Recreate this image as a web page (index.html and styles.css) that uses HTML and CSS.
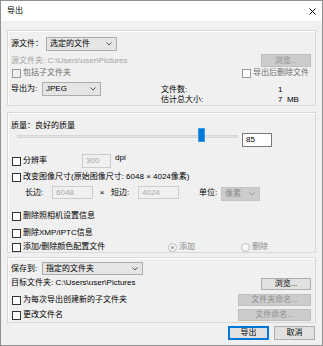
FILE: index.html
```html
<!DOCTYPE html>
<html lang="zh-CN">
<head>
  <meta charset="UTF-8" />
  <title>导出</title>
  <link rel="stylesheet" href="styles.css">
</head>
<body>
  <div class="window">
    <div class="titlebar">
      <span>导出</span>
      <svg class="close" width="7" height="7" viewBox="0 0 7 7"><path d="M0.5 0.5L6.5 6.5M6.5 0.5L0.5 6.5" stroke="#000" stroke-width="1"/></svg>
    </div>

    <div class="content">
      <!-- 源 -->
      <div class="group g1">
        <div class="row r-src">
          <span class="lbl w35">源文件：</span>
          <div class="select w71"><span>选定的文件</span><svg width="6" height="4" viewBox="0 0 6 4"><polyline points="0.5,0.5 3,3 5.5,0.5" fill="none" stroke="#555"/></svg></div>
        </div>
        <div class="row r-folder">
          <span class="gray">源文件夹: C:\Users\user\Pictures</span>
          <div class="btn disabled w50 push">浏览...</div>
        </div>
        <div class="row r-check">
          <label class="check dim"><span class="cb off"></span>包括子文件夹</label>
          <label class="check dim push w70"><span class="cb"></span>导出后删除文件</label>
        </div>
        <div class="row r-format">
          <div class="fmt">
            <span class="lbl w31">导出为:</span>
            <div class="select w59"><span>JPEG</span><svg width="6" height="4" viewBox="0 0 6 4"><polyline points="0.5,0.5 3,3 5.5,0.5" fill="none" stroke="#555"/></svg></div>
          </div>
          <div class="stats">
            <div class="stat"><span class="stat-k">文件数:</span><span>1</span></div>
            <div class="stat"><span class="stat-k">估计总大小:</span><span>7&nbsp;&nbsp;MB</span></div>
          </div>
        </div>
      </div>

      <!-- 图像 -->
      <div class="group g2">
        <div class="row r-quality">质量：良好的质量</div>
        <div class="row r-slider">
          <div class="track"><span class="thumb"></span></div>
          <div class="input w30">85</div>
        </div>
        <div class="row r-dpi">
          <label class="check w71"><span class="cb"></span>分辨率</label>
          <div class="input disabled w29">300</div>
          <span class="dpi">dpi</span>
        </div>
        <div class="row r-resize">
          <label class="check"><span class="cb"></span>改变图像尺寸(原始图像尺寸: 6048 × 4024像素)</label>
        </div>
        <div class="row r-size">
          <span class="lbl w27">长边:</span>
          <div class="input disabled w41">6048</div>
          <span class="times">×</span>
          <span class="lbl w27">短边:</span>
          <div class="input disabled w41">4024</div>
          <span class="lbl w22 unit">单位:</span>
          <div class="select disabled w39"><span>像素</span><svg width="6" height="4" viewBox="0 0 6 4"><polyline points="0.5,0.5 3,3 5.5,0.5" fill="none" stroke="#999"/></svg></div>
        </div>
        <div class="row r-cam">
          <label class="check"><span class="cb"></span>删除照相机设置信息</label>
        </div>
        <div class="row r-xmp">
          <label class="check"><span class="cb"></span>删除XMP/IPTC信息</label>
        </div>
        <div class="row r-color">
          <label class="check w157"><span class="cb"></span>添加/删除颜色配置文件</label>
          <label class="radio w73"><span class="rb on"></span>添加</label>
          <label class="radio"><span class="rb"></span>删除</label>
        </div>
      </div>

      <!-- 保存 -->
      <div class="group g3">
        <div class="row r-save">
          <span class="lbl w31">保存到:</span>
          <div class="select w101"><span>指定的文件夹</span><svg width="6" height="4" viewBox="0 0 6 4"><polyline points="0.5,0.5 3,3 5.5,0.5" fill="none" stroke="#555"/></svg></div>
        </div>
        <div class="row r-target">
          <span class="top">目标文件夹: C:\Users\user\Pictures</span>
          <div class="btn w50 push">浏览...</div>
        </div>
        <div class="row r-sub">
          <label class="check"><span class="cb"></span>为每次导出创建新的子文件夹</label>
          <div class="btn disabled w73 push">文件夹命名...</div>
        </div>
        <div class="row r-name">
          <label class="check"><span class="cb"></span>更改文件名</label>
          <div class="btn disabled w73 push">文件命名...</div>
        </div>
      </div>

      <div class="actions">
        <div class="btn primary w41">导出</div>
        <div class="btn w41">取消</div>
      </div>
    </div>
  </div>
</body>
</html>
```
FILE: styles.css
```css
* {
  box-sizing: border-box;
}

body {
  margin: 0;
  font-family: 'Liberation Sans', 'Noto Sans CJK SC', sans-serif;
  font-size: 8px;
  line-height: 10px;
  color: #000;
  background: #f0f0f0;
}

.window {
  width: 323px;
  height: 346px;
  border: 1px solid #8f8f8f;
  background: #f0f0f0;
}

.titlebar {
  height: 20px;
  background: #fff;
  display: flex;
  align-items: center;
  justify-content: space-between;
  padding: 0 6px 0 6px;
}

.content {
  padding: 0 6px;
}

.group {
  border: 1px solid #d9d9d9;
  box-shadow: inset 1px 1px 0 #fff;
  padding: 0 4px 0 3px;
}

.g1 { margin-top: 9px; }
.g2 { margin-top: 6px; margin-bottom: 1px; }
.g3 { margin-top: 4px; padding-bottom: 1px; }

.row {
  display: flex;
  align-items: center;
}

.push { margin-left: auto; }

.w22 { width: 22px; }
.w27 { width: 27px; }
.w29 { width: 29px; }
.w30 { width: 30px; }
.w31 { width: 31px; }
.w35 { width: 35px; }
.w39 { width: 39px; }
.w41 { width: 41px; }
.w50 { width: 50px; }
.w59 { width: 59px; }
.w70 { width: 70px; }
.w71 { width: 71px; }
.w73 { width: 73px; }
.w101 { width: 101px; }
.w157 { width: 157px; }

.lbl { flex: none; }
.gray { color: #a3a3a3; }
.dim { color: #6d6d6d; }

/* controls */
.select {
  flex: none;
  height: 14px;
  display: flex;
  align-items: center;
  justify-content: space-between;
  padding: 0 4px 0 3px;
  background: #e5e5e5;
  border: 1px solid #acacac;
}

.select.disabled {
  background: #cccccc;
  border-color: #c4c4c4;
  color: #8a8a8a;
}

.btn {
  flex: none;
  height: 13px;
  display: flex;
  align-items: center;
  justify-content: center;
  background: #e1e1e1;
  border: 1px solid #adadad;
}

.btn.disabled {
  background: #cccccc;
  border-color: #bfbfbf;
  color: #8c8c8c;
}

.btn.primary {
  border-color: #0078d7;
  box-shadow: inset 0 0 0 1px #0078d7;
}

.input {
  flex: none;
  height: 14px;
  padding-left: 3px;
  display: flex;
  align-items: center;
  background: #fff;
  border: 1px solid #7a7a7a;
}

.input.disabled {
  background: #f0f0f0;
  border-color: #cccccc;
  color: #a8a8a8;
}

.check, .radio {
  display: flex;
  align-items: center;
  flex: none;
}

.cb {
  width: 9px;
  height: 9px;
  margin: 0 2px 0 1px;
  border: 1px solid #333;
  background: #fff;
}

.cb.off {
  border-color: #bcbcbc;
  background: #f0f0f0;
}

.dim .cb { border-color: #9a9a9a; }

.radio { color: #8a8a8a; }

.rb {
  width: 9px;
  height: 9px;
  margin-right: 2px;
  border: 1px solid #bcbcbc;
  border-radius: 50%;
  background: #f7f7f7;
  display: flex;
  align-items: center;
  justify-content: center;
}

.rb.on::after {
  content: '';
  width: 3px;
  height: 3px;
  border-radius: 50%;
  background: #a0a0a0;
}

/* group 1 */
.r-src { margin-top: 6px; height: 14px; }
.r-folder { margin-top: 3px; height: 13px; }
.r-check { height: 12px; }
.r-format {
  margin-top: 3px;
  align-items: flex-start;
  height: 23px;
}

.fmt {
  width: 150px;
  display: flex;
  align-items: center;
}

.stats { margin-top: 3px; }

.stat { display: flex; }

.stat-k { width: 117px; }

/* group 2 */
.r-quality { margin-top: 8px; height: 10px; }

.r-slider {
  height: 16px;
  align-items: flex-start;
}

.track {
  position: relative;
  margin: 4px 4px 0 6px;
  width: 221px;
  height: 3px;
  background: #e2e2e2;
  border: 1px solid #d6d6d6;
}

.thumb {
  position: absolute;
  left: 180px;
  top: -8px;
  width: 7px;
  height: 14px;
  background: #0078d7;
  border: 1px solid #3c9be6;
}

.r-slider .input { margin-top: 2px; }

.r-dpi { margin-top: 7px; height: 14px; }

.dpi {
  align-self: flex-start;
  margin-left: 4px;
  line-height: 8px;
}

.r-resize { margin-top: 4px; height: 10px; }

.r-size { margin-top: 4px; height: 13px; align-items: flex-start; }
.r-size .lbl { margin-top: 2px; }
.r-size .input { height: 13px; }
.r-size > .lbl:first-child { margin-left: 14px; }

.times {
  width: 18px;
  text-align: center;
  margin-top: 2px;
}

.unit { margin-left: 20px; }
.r-size .select { margin-top: 1px; }

.r-cam { margin-top: 12px; height: 10px; }
.r-xmp { margin-top: 7px; height: 10px; }
.r-color { margin-top: 4px; height: 10px; }

/* group 3 */
.r-save { margin-top: 4px; height: 13px; }
.r-save .select { height: 13px; }

.r-target {
  margin-top: 3px;
  height: 12px;
  align-items: flex-start;
}

.r-target .btn { height: 12px; }
.top { line-height: 9px; }

.r-sub { margin-top: 4px; height: 12px; }
.r-sub .btn, .r-name .btn { height: 12px; }
.r-name { margin-top: 3px; height: 12px; }

.actions {
  display: flex;
  justify-content: flex-end;
  gap: 5px;
  margin-top: 3px;
  padding-right: 1px;
}

.actions .btn { height: 14px; }
```
